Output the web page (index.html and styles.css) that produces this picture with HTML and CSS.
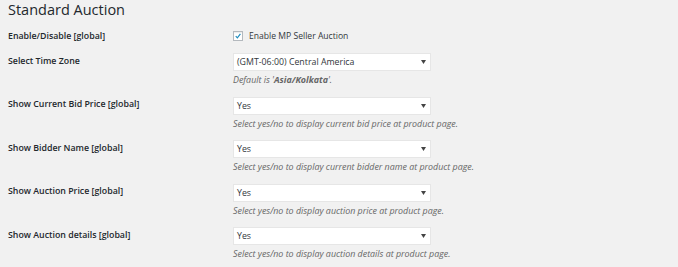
FILE: index.html
```html
<!DOCTYPE html>
<html lang="en">
<head>
<meta charset="utf-8">
<title>Standard Auction</title>
<link rel="stylesheet" href="styles.css">
</head>
<body>
<div class="page">
  <h2 class="title">Standard Auction</h2>
  <div class="form">
    <div class="row row-check">
      <div class="label">Enable/Disable [global]</div>
      <div class="field">
        <label class="check">
          <span class="box"><svg viewBox="0 0 10 10" width="10" height="10"><path d="M2.2 5.2 L4.2 7.3 L8 2.4" fill="none" stroke="#1e8cbe" stroke-width="1.5"/></svg></span>
          <span>Enable MP Seller Auction</span>
        </label>
      </div>
    </div>
    <div class="row">
      <div class="label">Select Time Zone</div>
      <div class="field">
        <div class="select"><span>(GMT-06:00) Central America</span><svg class="arrow" viewBox="0 0 5 4" width="5" height="4"><path d="M0 0 H5 L2.5 4 Z" fill="#444"/></svg></div>
        <p class="desc">Default is '<b>Asia/Kolkata</b>'.</p>
      </div>
    </div>
    <div class="row">
      <div class="label">Show Current Bid Price [global]</div>
      <div class="field">
        <div class="select"><span>Yes</span><svg class="arrow" viewBox="0 0 5 4" width="5" height="4"><path d="M0 0 H5 L2.5 4 Z" fill="#444"/></svg></div>
        <p class="desc">Select yes/no to display current bid price at product page.</p>
      </div>
    </div>
    <div class="row">
      <div class="label">Show Bidder Name [global]</div>
      <div class="field">
        <div class="select"><span>Yes</span><svg class="arrow" viewBox="0 0 5 4" width="5" height="4"><path d="M0 0 H5 L2.5 4 Z" fill="#444"/></svg></div>
        <p class="desc">Select yes/no to display current bidder name at product page.</p>
      </div>
    </div>
    <div class="row">
      <div class="label">Show Auction Price [global]</div>
      <div class="field">
        <div class="select"><span>Yes</span><svg class="arrow" viewBox="0 0 5 4" width="5" height="4"><path d="M0 0 H5 L2.5 4 Z" fill="#444"/></svg></div>
        <p class="desc">Select yes/no to display auction price at product page.</p>
      </div>
    </div>
    <div class="row">
      <div class="label">Show Auction details [global]</div>
      <div class="field">
        <div class="select"><span>Yes</span><svg class="arrow" viewBox="0 0 5 4" width="5" height="4"><path d="M0 0 H5 L2.5 4 Z" fill="#444"/></svg></div>
        <p class="desc">Select yes/no to display auction details at product page.</p>
      </div>
    </div>
  </div>
</div>
</body>
</html>
```
FILE: styles.css
```css
html, body {
  margin: 0;
  padding: 0;
  background: #f1f1f1;
}
body {
  font-family: "Open Sans", "Noto Sans", sans-serif;
  color: #23282d;
}
.page {
  padding-left: 8px;
}
.title {
  margin: 0;
  font-size: 14.5px;
  line-height: 20px;
  font-weight: 400;
  color: #23282d;
}
.form {
  display: flex;
  flex-direction: column;
}
.row {
  display: grid;
  grid-template-columns: 225px 198px;
  padding: 5px 0 5.5px;
}
.row-check {
  padding: 10px 0 6px;
}
.label {
  font-size: 8.8px;
  font-weight: 600;
  line-height: 12px;
  padding-top: 1.5px;
  color: #23282d;
}
.row-check .label {
  padding-top: 0;
}
.field {
  display: flex;
  flex-direction: column;
}
.check {
  display: flex;
  align-items: center;
  gap: 6px;
  height: 12px;
  font-size: 8.6px;
  color: #32373c;
}
.box {
  width: 10px;
  height: 10px;
  box-sizing: border-box;
  border: 1px solid #b4b9be;
  background: #fff;
  display: flex;
  align-items: center;
  justify-content: center;
  box-shadow: inset 0 1px 1px rgba(0,0,0,0.08);
}
.box svg {
  display: block;
}
.select {
  height: 18px;
  box-sizing: border-box;
  border: 1px solid #e6e6e6;
  background: #fff;
  display: flex;
  align-items: center;
  justify-content: space-between;
  padding: 0 4px 0 3px;
  font-size: 8.8px;
  color: #32373c;
}
.arrow {
  display: block;
}
.desc {
  margin: 3px 0 0;
  font-size: 8.9px;
  line-height: 12px;
  font-style: italic;
  color: #666;
  white-space: nowrap;
}
.desc b {
  font-weight: 700;
}
```
